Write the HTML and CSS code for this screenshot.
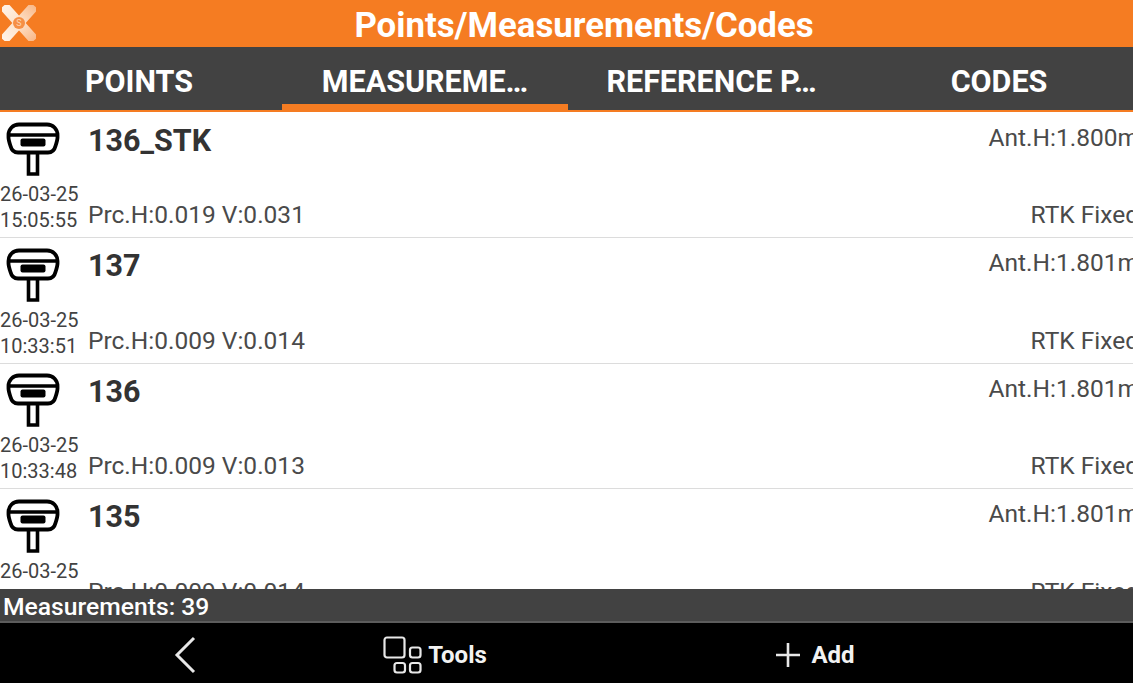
FILE: index.html
```html
<!DOCTYPE html>
<html lang="en">
<head>
    <meta charset="UTF-8">
    <title>Points/Measurements/Codes</title>
    <link rel="stylesheet" href="styles.css">
</head>
<body>
    <svg class="defs" width="0" height="0">
        <symbol id="receiver" viewBox="0 0 54 54">
            <path d="M13 2.5H41C47 2.5 51.5 7 51.5 13V15.5C51.5 18 50.5 21 49.5 24C48.5 28 46 30.5 42 30.5H12C8 30.5 5.5 28 4.5 24C3.5 21 2.5 18 2.5 15.5V13C2.5 7 7 2.5 13 2.5Z" fill="none" stroke="#000" stroke-width="3.8"/>
            <path d="M3 13H51" fill="none" stroke="#000" stroke-width="3.4"/>
            <rect x="14.5" y="16.5" width="25" height="8" rx="2" fill="#000"/>
            <path d="M22.5 31V52H31.5V31" fill="none" stroke="#000" stroke-width="3.6"/>
        </symbol>
        <linearGradient id="logoFill" x1="0" y1="0" x2="1" y2="0">
            <stop offset="0" stop-color="#fff3e8"/>
            <stop offset="0.6" stop-color="#fddcc0"/>
            <stop offset="1" stop-color="#f9b98a"/>
        </linearGradient>
    </svg>

    <div class="app">
        <!-- Title bar -->
        <header class="title-bar">
            <svg class="logo" viewBox="0 0 34 36">
                <rect x="-6" y="13" width="46" height="10" rx="2" fill="url(#logoFill)" transform="rotate(48 17 18)"/>
                <rect x="-6" y="13" width="46" height="10" rx="2" fill="url(#logoFill)" transform="rotate(-48 17 18)"/>
                <circle cx="17" cy="18" r="6" fill="#f68f45"/>
                <text class="logo-s" x="17" y="21" text-anchor="middle">S</text>
            </svg>
            <h1>Points/Measurements/Codes</h1>
        </header>

        <!-- Tabs -->
        <nav class="tabs">
            <a class="tab">POINTS</a>
            <a class="tab active">MEASUREME…</a>
            <a class="tab">REFERENCE P…</a>
            <a class="tab">CODES</a>
        </nav>

        <!-- List -->
        <main class="list">
            <div class="row">
                <div class="row-left">
                    <svg class="receiver"><use href="#receiver"/></svg>
                    <span class="date">26-03-25<br>15:05:55</span>
                </div>
                <div class="row-main">
                    <div class="row-line"><span class="name">136_STK</span><span class="info">Ant.H:1.800m</span></div>
                    <div class="row-line"><span class="info">Prc.H:0.019 V:0.031</span><span class="info">RTK Fixed</span></div>
                </div>
            </div>
            <div class="row">
                <div class="row-left">
                    <svg class="receiver"><use href="#receiver"/></svg>
                    <span class="date">26-03-25<br>10:33:51</span>
                </div>
                <div class="row-main">
                    <div class="row-line"><span class="name">137</span><span class="info">Ant.H:1.801m</span></div>
                    <div class="row-line"><span class="info">Prc.H:0.009 V:0.014</span><span class="info">RTK Fixed</span></div>
                </div>
            </div>
            <div class="row">
                <div class="row-left">
                    <svg class="receiver"><use href="#receiver"/></svg>
                    <span class="date">26-03-25<br>10:33:48</span>
                </div>
                <div class="row-main">
                    <div class="row-line"><span class="name">136</span><span class="info">Ant.H:1.801m</span></div>
                    <div class="row-line"><span class="info">Prc.H:0.009 V:0.013</span><span class="info">RTK Fixed</span></div>
                </div>
            </div>
            <div class="row">
                <div class="row-left">
                    <svg class="receiver"><use href="#receiver"/></svg>
                    <span class="date">26-03-25<br>10:33:44</span>
                </div>
                <div class="row-main">
                    <div class="row-line"><span class="name">135</span><span class="info">Ant.H:1.801m</span></div>
                    <div class="row-line"><span class="info">Prc.H:0.009 V:0.014</span><span class="info">RTK Fixed</span></div>
                </div>
            </div>
        </main>

        <!-- Count -->
        <div class="count-bar">Measurements: 39</div>

        <!-- Bottom buttons -->
        <footer class="tool-bar">
            <a class="tool tool-back">
                <svg width="26" height="38" viewBox="0 0 26 38"><path d="M22 2L5 19L22 36" fill="none" stroke="#e8e8e8" stroke-width="3"/></svg>
            </a>
            <a class="tool tool-tools">
                <svg width="40" height="38" viewBox="0 0 40 38">
                    <rect x="1.5" y="1.5" width="20" height="20" rx="2.5" fill="none" stroke="#e8e8e8" stroke-width="2.2"/>
                    <rect x="27" y="11.5" width="10.5" height="10" rx="2.5" fill="none" stroke="#e8e8e8" stroke-width="2.2"/>
                    <rect x="11.5" y="27" width="10.5" height="9.5" rx="2.5" fill="none" stroke="#e8e8e8" stroke-width="2.2"/>
                    <rect x="27" y="27" width="10.5" height="9.5" rx="2.5" fill="none" stroke="#e8e8e8" stroke-width="2.2"/>
                </svg>
                <span>Tools</span>
            </a>
            <a class="tool tool-add">
                <svg width="26" height="26" viewBox="0 0 26 26"><path d="M13 1V25M1 13H25" fill="none" stroke="#e8e8e8" stroke-width="2.6"/></svg>
                <span>Add</span>
            </a>
        </footer>
    </div>
</body>
</html>
```
FILE: styles.css
```css
* {
    box-sizing: border-box;
}
html, body {
    margin: 0;
    height: 100%;
    overflow: hidden;
}
body {
    font-family: Roboto, "Liberation Sans", sans-serif;
    background: #fff;
}
.defs {
    display: block;
    height: 0;
}
.app {
    display: flex;
    flex-direction: column;
    height: 683px;
}

/* Title bar */
.title-bar {
    position: relative;
    flex: 0 0 47px;
    background: #f57c22;
    display: flex;
    align-items: center;
    justify-content: center;
}
.title-bar h1 {
    margin: 0;
    color: #fff;
    font-size: 34.8px;
    font-weight: 700;
    padding: 3px 0 0 35px;
}
.logo {
    position: absolute;
    left: 2px;
    top: 5px;
    width: 34px;
    height: 36px;
}
.logo-s {
    font-size: 9px;
    fill: #fbd3b3;
}

/* Tabs */
.tabs {
    flex: 0 0 65px;
    background: #424242;
    border-bottom: 2px solid #f57c22;
    display: flex;
    overflow: hidden;
}
.tab {
    flex: 0 0 287px;
    display: flex;
    align-items: center;
    justify-content: center;
    color: #fff;
    font-size: 30.5px;
    font-weight: 700;
    border-bottom: 6px solid transparent;
    padding-top: 12px;
}
.tab:first-child {
    flex-basis: 282px;
    padding-right: 4px;
}
.tab.active {
    flex-basis: 286px;
    border-bottom-color: #f57c22;
}
.tab:last-child {
    flex-basis: 288px;
}

/* List */
.list {
    flex: 1 1 0;
    overflow: hidden;
    min-height: 0;
    padding-top: 0.5px;
}
.row {
    display: flex;
    height: 125.5px;
    border-bottom: 1px solid #dcdcdc;
}
.row-left {
    flex: 0 0 88px;
    display: flex;
    flex-direction: column;
    padding-top: 9.5px;
}
.receiver {
    width: 54px;
    height: 54px;
    margin-left: 6px;
}
.date {
    margin-top: 5px;
    font-size: 20px;
    line-height: 26px;
    color: #424242;
}
.row-main {
    flex: 1;
    min-width: 0;
    display: flex;
    flex-direction: column;
    justify-content: space-between;
    padding: 8px 0 7px;
}
.row-line {
    display: flex;
    justify-content: space-between;
    white-space: nowrap;
    margin-right: -6px;
}
.name {
    font-size: 30.5px;
    font-weight: 700;
    color: #333;
    line-height: 40px;
}
.name + .info {
    padding-top: 2px;
}
.info {
    font-size: 24.5px;
    line-height: 30px;
    color: #4a4a4a;
}

/* Count bar */
.count-bar {
    flex: 0 0 34px;
    background: #424242;
    border-bottom: 2px solid #5c5c5c;
    color: #fff;
    font-size: 24.7px;
    font-weight: 500;
    line-height: 32px;
    padding: 2px 0 0 3px;
    overflow: hidden;
}

/* Bottom buttons */
.tool-bar {
    flex: 0 0 60px;
    background: #000;
    display: flex;
    align-items: center;
    padding-top: 4px;
}
.tool {
    display: flex;
    align-items: center;
    color: #f2f2f2;
    font-size: 24px;
    font-weight: 700;
    justify-content: center;
}
.tool-back {
    flex: 0 0 370px;
}
.tool-tools {
    flex: 0 0 130px;
    gap: 5px;
}
.tool-add {
    flex: 0 0 630px;
    gap: 10px;
}
```
